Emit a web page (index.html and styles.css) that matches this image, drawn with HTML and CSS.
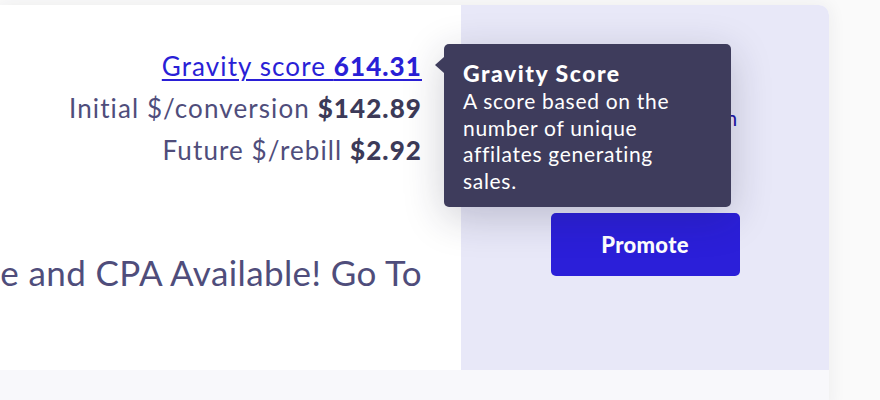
FILE: index.html
```html
<!DOCTYPE html>
<html lang="en">
<head>
  <meta charset="UTF-8" />
  <title>Marketplace // Offer</title>
  <link rel="stylesheet" href="styles.css">
</head>
<body>

  <div class="offer-card">
    <div class="offer-body">

      <div class="offer-main">
        <div class="stats">
          <div class="stat stat-gravity">
            <a class="gravity-link" href="#">Gravity score <strong>614.31</strong></a>
            <div class="tooltip">
              <div class="tooltip-title">Gravity Score</div>
              <div class="tooltip-text">A score based on the number of unique affilates generating sales.</div>
            </div>
          </div>
          <div class="stat">Initial $/conversion <strong>$142.89</strong></div>
          <div class="stat">Future $/rebill <strong>$2.92</strong></div>
        </div>

        <p class="headline">High Converting Offer With Recurring Revenue and CPA Available! Go To</p>
      </div>

      <div class="offer-side">
        <a class="side-link" href="#">Affiliate Information</a>
        <button class="promote">Promote</button>
      </div>

    </div>
    <div class="offer-footer"></div>
  </div>

</body>
</html>
```

FILE: styles.css
```css
html, body {
  margin: 0;
  padding: 0;
  overflow: hidden;
}

body {
  background-color: #fafafa;
  font-family: Lato, "Open Sans", sans-serif;
  color: #4f4d7b;
}

.offer-card {
  width: 829px;
  margin-top: 5px;
  background-color: #fff;
  border-radius: 0 10px 0 0;
  box-shadow: 0 0 18px rgba(40, 40, 60, 0.07);
}

.offer-body {
  display: flex;
  height: 365px;
}

.offer-main {
  width: 461px;
  flex: none;
  box-sizing: border-box;
  padding: 40px 39px 0 0;
  display: flex;
  flex-direction: column;
  align-items: flex-end;
}

.stats {
  text-align: right;
  font-size: 26px;
  line-height: 42px;
  letter-spacing: 1.1px;
}

.stat strong {
  color: #3c3a58;
  font-weight: 900;
}

.stat-gravity {
  position: relative;
}

.gravity-link {
  color: #2a1fd6;
  text-decoration: underline;
  text-decoration-thickness: 2px;
  text-underline-offset: 3px;
}

.gravity-link strong {
  color: #2a1fd6;
}

.tooltip {
  position: absolute;
  top: -1px;
  left: calc(100% + 22px);
  width: 287px;
  height: 163px;
  box-sizing: border-box;
  padding: 14px 36px 0 19px;
  background-color: #3e3c5c;
  border-radius: 5px;
  color: #fff;
  text-align: left;
  letter-spacing: 0;
  box-shadow: 0 10px 40px rgba(30, 30, 60, 0.22);
  z-index: 2;
}

.tooltip::before {
  content: "";
  position: absolute;
  left: -9px;
  top: 13px;
  border-top: 8px solid transparent;
  border-bottom: 8px solid transparent;
  border-right: 9px solid #3e3c5c;
}

.tooltip-title {
  font-size: 23px;
  font-weight: 900;
  line-height: 30px;
  letter-spacing: 1.5px;
}

.tooltip-text {
  font-size: 21px;
  line-height: 26.5px;
  letter-spacing: 0.7px;
}

.headline {
  margin: 81px 0 0;
  white-space: nowrap;
  font-size: 35px;
  line-height: 40px;
  letter-spacing: 0.4px;
}

.offer-side {
  flex: 1;
  background-color: #e8e8f8;
  border-radius: 0 10px 0 0;
  display: flex;
  flex-direction: column;
  align-items: center;
  padding-top: 100px;
  box-sizing: border-box;
}

.side-link {
  color: #1f13a8;
  font-size: 21px;
  text-decoration: none;
  line-height: 26px;
}

.promote {
  margin-top: 82px;
  width: 189px;
  height: 63px;
  border: none;
  border-radius: 5px;
  background-color: #2b1fd9;
  color: #fff;
  font-family: inherit;
  font-size: 22px;
  font-weight: 900;
  letter-spacing: 0.3px;
}

.offer-footer {
  height: 40px;
  background-color: #f8f8fb;
}
```
